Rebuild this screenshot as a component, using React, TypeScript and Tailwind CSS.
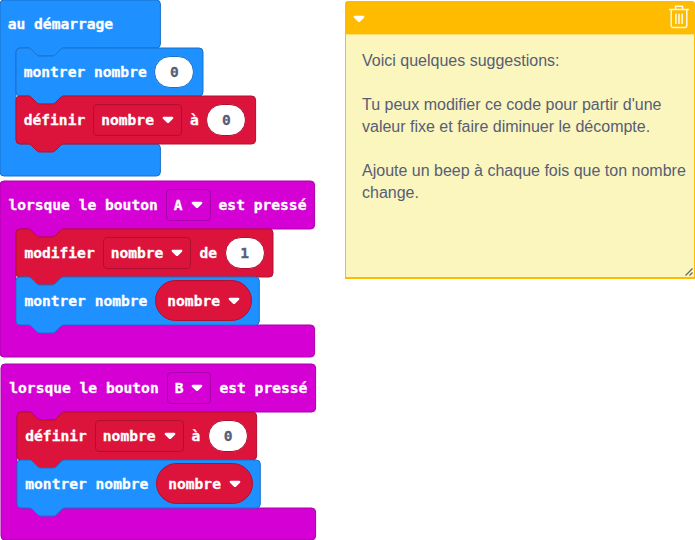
import type { ReactNode } from "react";

type Tone = "blue" | "red" | "magenta";

const tones: Record<Tone, { fill: string; stroke: string; border: string }> = {
  blue: { fill: "#1e90ff", stroke: "#1873cc", border: "border-[#1873cc]" },
  red: { fill: "#dc143c", stroke: "#b01030", border: "border-[#b01030]" },
  magenta: { fill: "#d400d4", stroke: "#aa00aa", border: "border-[#aa00aa]" },
};

const notchRight = "c2 0 3 1 4 2l4 4c1 1 2 2 4 2h12c2 0 3 -1 4 -2l4 -4c1 -1 2 -2 4 -2";
const notchLeft = "c-2 0 -3 1 -4 2l-4 4c-1 1 -2 2 -4 2h-12c-2 0 -3 -1 -4 -2l-4 -4c-1 -1 -2 -2 -4 -2";

function Shape({ d, tone }: { d: string; tone: Tone }) {
  return (
    <svg className="absolute left-0 top-0 h-full w-full overflow-visible" aria-hidden="true">
      <path d={d} fill={tones[tone].fill} stroke={tones[tone].stroke} strokeWidth="1" />
    </svg>
  );
}

function Arrow() {
  return (
    <svg className="h-2 w-3 shrink-0" viewBox="0 0 12 8" aria-hidden="true">
      <path
        d="M1.9 .8h8.2c1.2 0 1.7 1.1.9 1.9L7.2 6.5c-.7.7-1.7.7-2.4 0L1 2.7C.2 1.9.7.8 1.9.8z"
        fill="#fff"
      />
    </svg>
  );
}

function Dropdown({ label, tone }: { label: string; tone: Tone }) {
  return (
    <span
      className={`flex h-8 shrink-0 items-center gap-2 rounded border px-[7px] ${tones[tone].border}`}
    >
      <span>{label}</span>
      <Arrow />
    </span>
  );
}

function Value({ children, tone }: { children: ReactNode; tone: Tone }) {
  return (
    <span
      className={`-ml-[0.3px] flex h-8 w-10 shrink-0 items-center justify-center rounded-full border bg-white text-[#575e75] ${tones[tone].border}`}
    >
      {children}
    </span>
  );
}

function Variable() {
  return (
    <span className="-ml-[0.5px] flex h-[41px] w-[97.5px] shrink-0 items-center justify-center gap-2 rounded-full border border-[#b01030] bg-[#dc143c]">
      <span>nombre</span>
      <Arrow />
    </span>
  );
}

function Statement({ tone, width, children }: { tone: Tone; width: number; children: ReactNode }) {
  const d = `M0 4a4 4 0 0 1 4 -4h8${notchRight}H${width - 4}a4 4 0 0 1 4 4v40a4 4 0 0 1 -4 4H48${notchLeft}H4a4 4 0 0 1 -4 -4z`;
  return (
    <div className="relative h-12 w-max">
      <Shape d={d} tone={tone} />
      <div className="relative flex h-12 items-center gap-2 pl-2">{children}</div>
    </div>
  );
}

function EventBlock({
  tone,
  width,
  header,
  children,
}: {
  tone: Tone;
  width: number;
  header: ReactNode;
  children: ReactNode;
}) {
  const d = `M0 4a4 4 0 0 1 4 -4H${width - 4}a4 4 0 0 1 4 4v40a4 4 0 0 1 -4 4H64${notchLeft}h-8a4 4 0 0 0 -4 4v88a4 4 0 0 0 4 4H${width - 4}a4 4 0 0 1 4 4v24a4 4 0 0 1 -4 4H4a4 4 0 0 1 -4 -4z`;
  return (
    <section className="relative h-44">
      <Shape d={d} tone={tone} />
      <header className="relative flex h-12 items-center gap-2 pl-2">{header}</header>
      <div className="flex flex-col pl-4">{children}</div>
    </section>
  );
}

function Note() {
  return (
    <aside className="relative mt-px flex h-[278px] w-[350px] flex-col rounded-t-[3px] border border-b-2 border-[#ffbb00] bg-[#fbf5be]">
      <header className="flex h-[33px] items-center justify-between border-b border-[#ffdf70] bg-[#ffbb00] pl-[7px] pr-[5px]">
        <span className="pt-[2px]">
          <Arrow />
        </span>
        <svg className="mb-[3px] h-6 w-5" viewBox="0 0 20 24" fill="none" stroke="#fff8e0" aria-hidden="true">
          <path d="M0 4.5h20M6.5 4V1.2h7V4" strokeWidth="1.5" />
          <path d="M2.2 5v15.500a2 2 0 0 0 2 2h11.600a2 2 0 0 0 2 -2V5" strokeWidth="1.5" />
          <path d="M6.900 8.500v10.500M10 8.500v10.500M13.100 8.500v10.500" strokeWidth="1.600" />
        </svg>
      </header>
      <div className="pl-4 pt-[15px] font-['Liberation_Sans',Arial,sans-serif] text-[16px] leading-[22px] text-[#575e75]">
        <p>Voici quelques suggestions:</p>
        <p className="mt-[22px]">
          Tu peux modifier ce code pour partir d'une
          <br />
          valeur fixe et faire diminuer le décompte.
        </p>
        <p className="mt-[22px]">
          Ajoute un beep à chaque fois que ton nombre
          <br />
          change.
        </p>
      </div>
      <svg className="absolute bottom-px right-px h-2 w-2" viewBox="0 0 8 8" aria-hidden="true">
        <path d="M.5 7.500l7-7M4.500 7.500l3-3" stroke="#65655c" strokeWidth="1.200" />
      </svg>
    </aside>
  );
}

export default function App() {
  return (
    <main className="flex h-[540px] w-[695px] overflow-hidden bg-white">
      <div className="w-[345px] shrink-0 whitespace-pre font-['DejaVu_Sans_Mono',monospace] text-[14.6px] font-bold leading-5 text-white [-webkit-text-stroke:0.3px]">
        <div className="-ml-[0.3px] -mt-[0.4px]">
          <EventBlock tone="blue" width={160.4} header={<span>au démarrage</span>}>
            <Statement tone="blue" width={187}>
              <span>montrer nombre</span>
              <Value tone="blue">0</Value>
            </Statement>
            <Statement tone="red" width={239.6}>
              <span>définir</span>
              <Dropdown label="nombre" tone="red" />
              <span>à</span>
              <Value tone="red">0</Value>
            </Statement>
          </EventBlock>
        </div>
        <div className="ml-[0.4px] mt-[5.200px]">
          <EventBlock
            tone="magenta"
            width={314.6}
            header={
              <>
                <span>lorsque le bouton</span>
                <Dropdown label="A" tone="magenta" />
                <span>est pressé</span>
              </>
            }
          >
            <Statement tone="red" width={257}>
              <span>modifier</span>
              <Dropdown label="nombre" tone="red" />
              <span>de</span>
              <Value tone="red">1</Value>
            </Statement>
            <Statement tone="blue" width={243.3}>
              <span>montrer nombre</span>
              <Variable />
            </Statement>
          </EventBlock>
        </div>
        <div className="ml-[1.300px] mt-[6.800px]">
          <EventBlock
            tone="magenta"
            width={314.6}
            header={
              <>
                <span>lorsque le bouton</span>
                <Dropdown label="B" tone="magenta" />
                <span>est pressé</span>
              </>
            }
          >
            <Statement tone="red" width={239.6}>
              <span>définir</span>
              <Dropdown label="nombre" tone="red" />
              <span>à</span>
              <Value tone="red">0</Value>
            </Statement>
            <Statement tone="blue" width={243.3}>
              <span>montrer nombre</span>
              <Variable />
            </Statement>
          </EventBlock>
        </div>
      </div>
      <Note />
    </main>
  );
}
